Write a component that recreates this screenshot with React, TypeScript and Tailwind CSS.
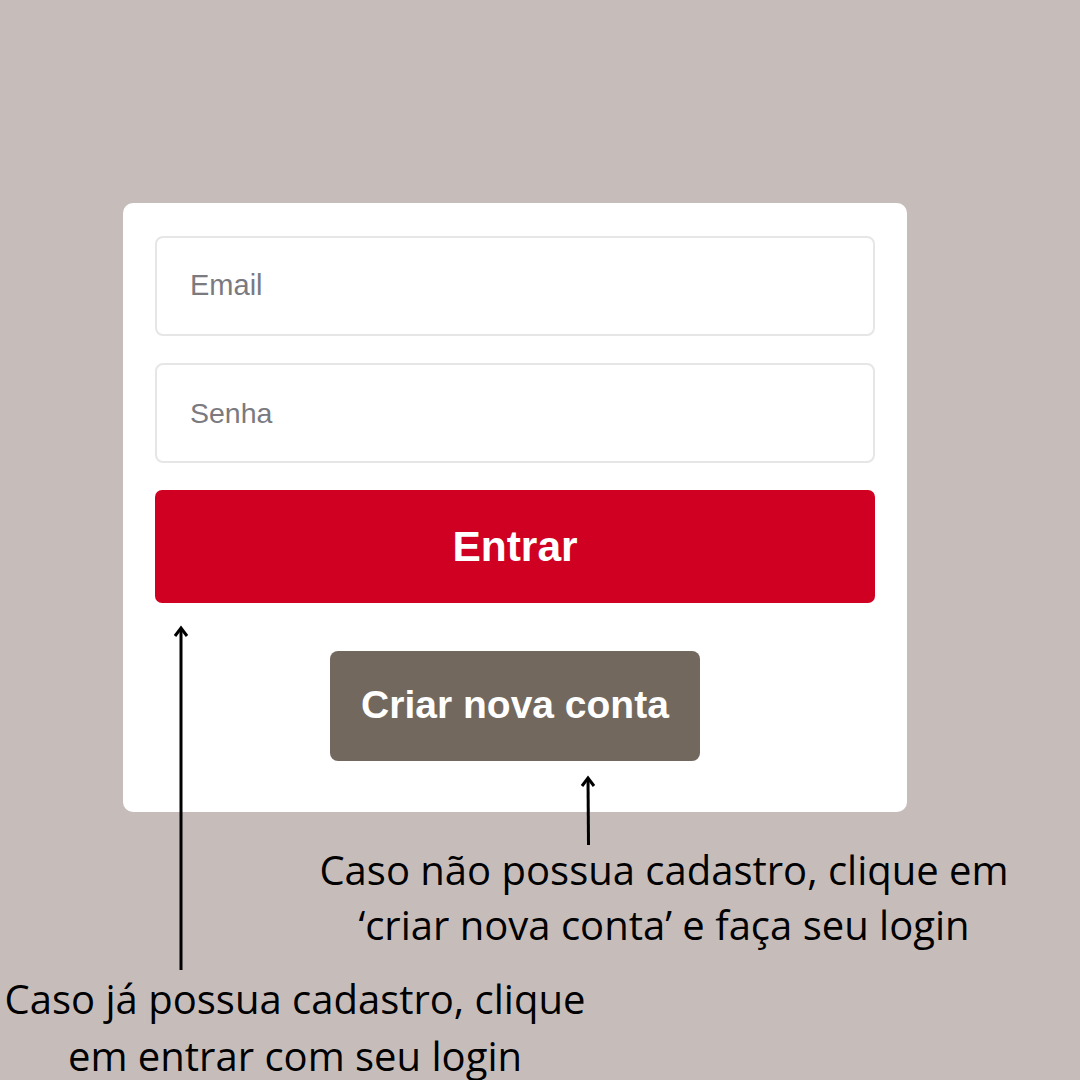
export default function App() {
  return (
    <div className="relative w-[1080px] h-[1080px] overflow-hidden bg-[#c6bdbb]" style={{ fontFamily: '"Open Sans", sans-serif' }}>
      <div className="pt-[203px] pl-[123px]">
        <div className="w-[784px] h-[609px] bg-white rounded-[10px] pt-[33px] px-[32px] flex flex-col" style={{ fontFamily: '"Liberation Sans", Arial, sans-serif' }}>
          <div className="h-[100px] border-2 border-[#e6e6e6] rounded-[8px] flex items-center pl-[33px] text-[29px] text-[#7a7a7f]">Email</div>
          <div className="mt-[27px] h-[100px] border-2 border-[#e6e6e6] rounded-[8px] flex items-center pl-[33px] text-[28.5px] text-[#7a7a7f]">Senha</div>
          <div className="mt-[27px] h-[113px] bg-[#d00022] rounded-[7px] flex items-center justify-center text-white font-bold text-[42.5px]">Entrar</div>
          <div className="mt-[48px] self-center w-[370px] h-[110px] bg-[#72685e] rounded-[8px] flex items-center justify-center text-white font-bold text-[39px] pb-[2px]">Criar nova conta</div>
        </div>
      </div>
      <div className="mt-[30px] ml-[300px] w-[728px] text-center text-[40px] leading-[55px] text-black whitespace-nowrap">
        Caso não possua cadastro, clique em<br />‘criar nova conta’ e faça seu login
      </div>
      <div className="mt-[18px] ml-[0px] w-[590px] text-center text-[40px] text-black whitespace-nowrap">
        <div className="leading-[57px]">Caso já possua cadastro, clique</div>
        <div className="leading-[44px] mt-[7px]">em entrar com seu login</div>
      </div>
      <svg className="absolute left-[171px] top-[624px]" width="20" height="348" viewBox="0 0 20 348">
        <path d="M10 4 L10 346" stroke="#000" strokeWidth="3" fill="none" />
        <path d="M4 12 L10 4 L16 12" stroke="#000" strokeWidth="3" fill="none" strokeLinejoin="miter" />
      </svg>
      <svg className="absolute left-[578px] top-[774px]" width="20" height="72" viewBox="0 0 20 72">
        <path d="M10 4 L10.5 71" stroke="#000" strokeWidth="3" fill="none" />
        <path d="M4 12 L10 4 L16 12" stroke="#000" strokeWidth="3" fill="none" />
      </svg>
    </div>
  );
}
